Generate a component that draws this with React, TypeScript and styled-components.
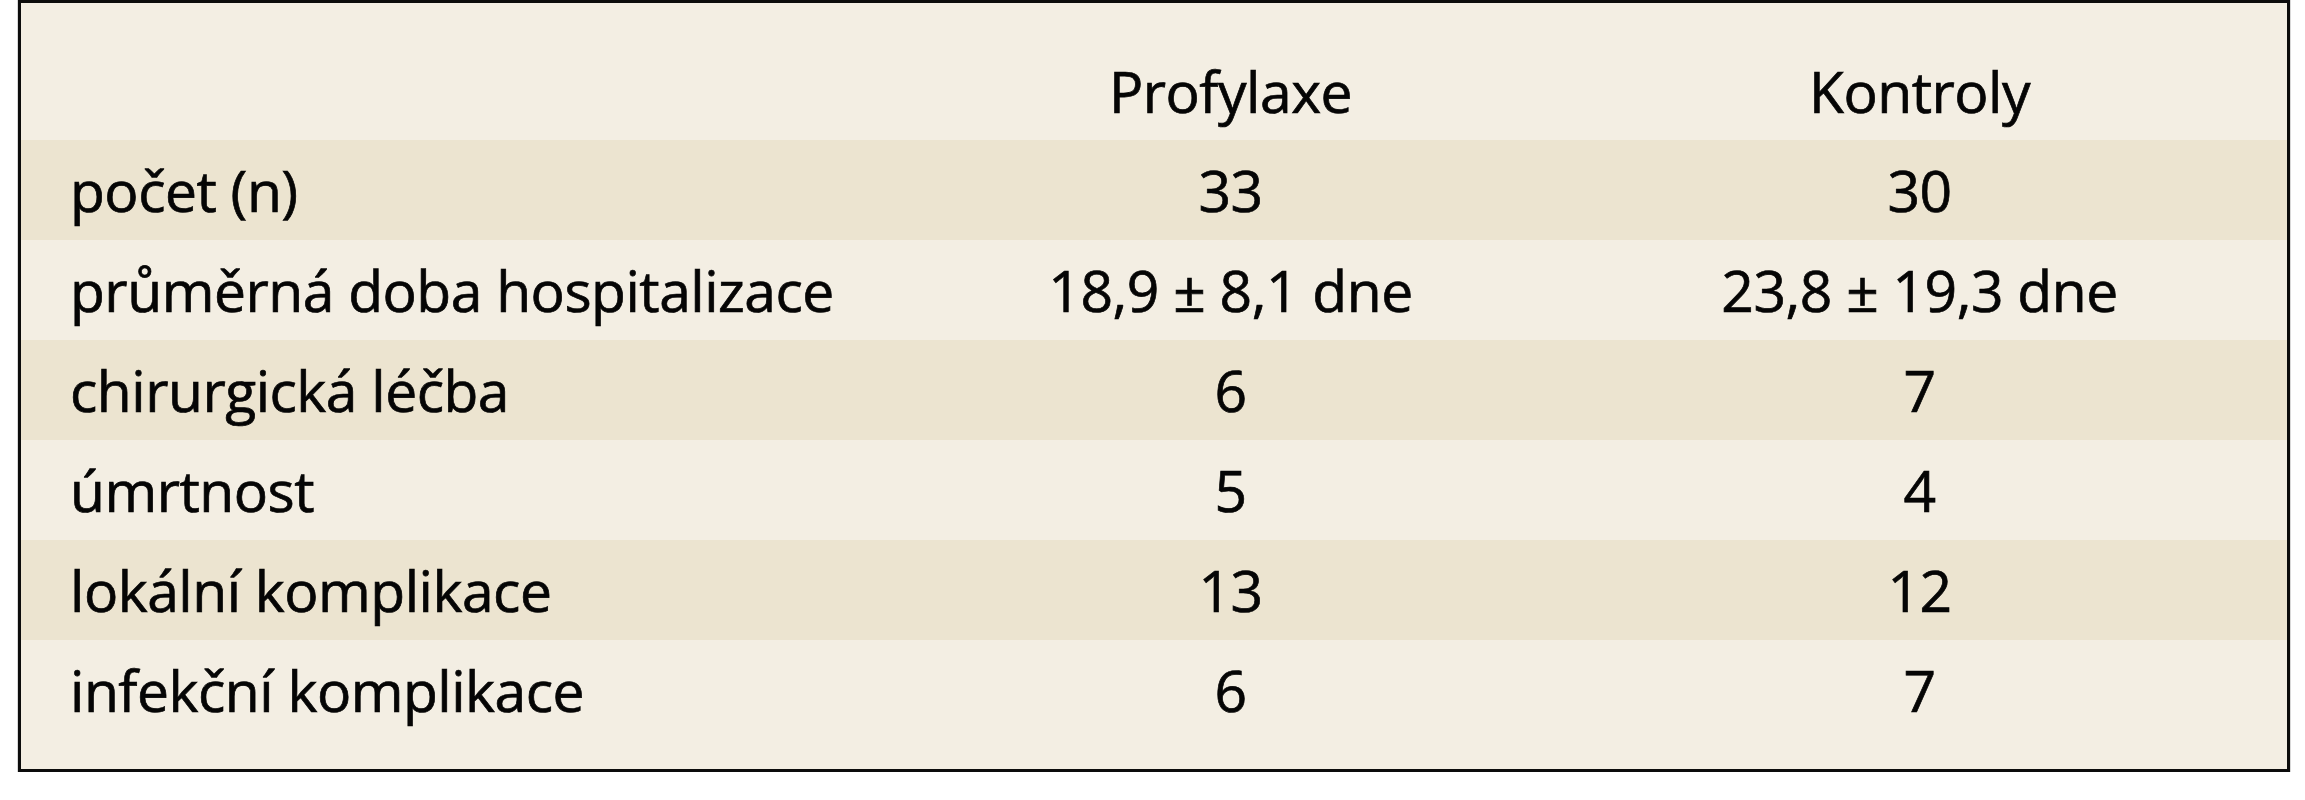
import React from 'react'
import styled, { createGlobalStyle } from 'styled-components'

const GlobalStyle = createGlobalStyle`
    html, body {
        margin: 0;
        padding: 0;
        background: #ffffff;
    }
`

const TableFrame = styled.div`
    box-sizing: border-box;
    width: 2272px;
    height: 772px;
    margin-left: 18px;
    border: 3px solid #0c0c0c;
    box-shadow: 0 0 0 1px #d8d8d8;
    background-color: #f3eee3;
    padding-bottom: 29px;
    font-family: 'Open Sans', 'Noto Sans', sans-serif;
    font-size: 57px;
    letter-spacing: -0.5px;
    color: #050505;
    -webkit-text-stroke: 0.7px #050505;
`

const Row = styled.div<{ tinted?: boolean, header?: boolean }>`
    display: grid;
    grid-template-columns: 865px 689px 689px;
    height: ${props => props.header ? '137px' : '100px'};
    align-items: ${props => props.header ? 'end' : 'center'};
    padding-bottom: ${props => props.header ? '10px' : '0'};
    box-sizing: border-box;
    background-color: ${props => props.tinted ? '#ece4d0' : 'transparent'};
`

const Label = styled.div`
    padding-left: 49px;
    white-space: nowrap;
`

const Value = styled.div`
    text-align: center;
    white-space: nowrap;
`

interface TableRow {
    label: string,
    prophylaxis: string,
    controls: string,
}

const rows: TableRow[] = [
    { label: 'počet (n)', prophylaxis: '33', controls: '30' },
    { label: 'průměrná doba hospitalizace', prophylaxis: '18,9 ± 8,1 dne', controls: '23,8 ± 19,3 dne' },
    { label: 'chirurgická léčba', prophylaxis: '6', controls: '7' },
    { label: 'úmrtnost', prophylaxis: '5', controls: '4' },
    { label: 'lokální komplikace', prophylaxis: '13', controls: '12' },
    { label: 'infekční komplikace', prophylaxis: '6', controls: '7' },
]

function App() {
    return (
        <>
            <GlobalStyle />
            <TableFrame>
                <Row header>
                    <Label />
                    <Value>Profylaxe</Value>
                    <Value>Kontroly</Value>
                </Row>
                {
                    rows.map((row, index) =>
                        <Row key={row.label} tinted={index % 2 === 0}>
                            <Label>{row.label}</Label>
                            <Value>{row.prophylaxis}</Value>
                            <Value>{row.controls}</Value>
                        </Row>
                    )
                }
            </TableFrame>
        </>
    )
}

export default App
